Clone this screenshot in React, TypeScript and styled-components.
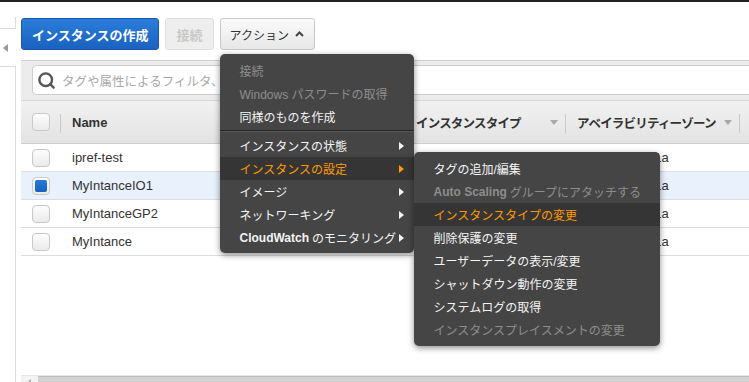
import React from "react";
import styled, { createGlobalStyle } from "styled-components";
import { Search } from "lucide-react";

const GlobalStyle = createGlobalStyle`
  html, body { margin: 0; padding: 0; overflow: hidden; background: #fff; }
  body { font-family: "Liberation Sans", "Noto Sans CJK JP", Arial, sans-serif; color: #333; }
  * { box-sizing: border-box; }
`;

const Page = styled.div`
  width: 749px;
  height: 392px;
  display: flex;
  flex-direction: column;
  overflow: hidden;
`;

const TopStrip = styled.div`
  height: 2px;
  flex-shrink: 0;
  background: #222;
`;

const Body = styled.div`
  flex: 1;
  display: flex;
  min-height: 0;
`;

const Sidebar = styled.div`
  width: 21px;
  flex-shrink: 0;
  display: flex;
  flex-direction: column;
`;

const SideTopBox = styled.div`
  width: 16px;
  height: 12px;
  margin-top: 15px;
  border-right: 1px solid #dcdcdc;
  border-bottom: 1px solid #dcdcdc;
`;

const SideArrow = styled.div`
  width: 0;
  height: 0;
  margin: 15px 0 0 3px;
  border-top: 4.5px solid transparent;
  border-bottom: 4.5px solid transparent;
  border-right: 5px solid #9a9a9a;
`;

const SideLowerBox = styled.div`
  flex: 1;
  width: 16px;
  margin-top: 14px;
  border-top: 1px solid #dcdcdc;
  border-right: 1px solid #dcdcdc;
`;

const Main = styled.div`
  flex: 1;
  display: flex;
  flex-direction: column;
  min-width: 0;
`;

const Toolbar = styled.div`
  display: flex;
  align-items: flex-start;
  gap: 6px;
  padding: 16px 0 10px;
`;

const Button = styled.button<{ $variant: "primary" | "disabled" | "default" }>`
  height: 32px;
  display: flex;
  align-items: center;
  gap: 6px;
  border-radius: 3px;
  font-family: "Liberation Sans", "Noto Sans CJK JP", sans-serif;
  cursor: pointer;
  ${(p) =>
    p.$variant === "primary"
      ? `
    padding: 0 10px;
    font-size: 13px;
    font-weight: bold;
    color: #fff;
    background: linear-gradient(#2b7ddb, #1a62c0);
    border: 1px solid #1958a8;
  `
      : p.$variant === "disabled"
      ? `
    padding: 0 10px;
    font-size: 13px;
    font-weight: bold;
    color: #c9c9c9;
    background: #eeeeee;
    border: 1px solid #dedede;
  `
      : `
    padding: 0 10px 0 9px;
    font-size: 12px;
    color: #333;
    background: linear-gradient(#fbfbfb, #e7e7e7);
    border: 1px solid #c8c8c8;
  `}
`;

const ActionWrap = styled.div`
  position: relative;
`;

const FilterPanel = styled.div`
  background: #ececec;
  border-top: 1px solid #cfcfcf;
  padding: 4px 0 5px 11px;
`;

const SearchBox = styled.div`
  height: 30px;
  display: flex;
  align-items: center;
  gap: 6px;
  padding-left: 4px;
  margin-right: -12px;
  background: #fff;
  border: 1px solid #cdcdcd;
  border-radius: 4px;
  color: #555;
`;

const Placeholder = styled.span`
  font-size: 12.5px;
  color: #a8a8a8;
  white-space: nowrap;
`;

const cols = "40px 344px 161px 174px 1fr";

const HeaderRow = styled.div`
  display: grid;
  grid-template-columns: ${cols};
  height: 44px;
  border-top: 1px solid #d6d6d6;
  border-bottom: 1px solid #cdcdcd;
  background: linear-gradient(#f1f1f1, #e3e3e3);
`;

const HeaderCell = styled.div<{ $sep?: boolean }>`
  position: relative;
  display: flex;
  align-items: center;
  padding: 0 8px 0 11px;
  font-size: 13px;
  font-weight: bold;
  color: #333;
  white-space: nowrap;
  overflow: hidden;
  &::after {
    content: "";
    display: ${(p) => (p.$sep ? "block" : "none")};
    position: absolute;
    right: 0;
    top: 13px;
    width: 1px;
    height: 19px;
    background: #c9c9c9;
  }
`;

const JpLabel = styled.span`
  font-size: 12.5px;
  letter-spacing: -0.8px;
`;

const Caret = styled.span`
  margin-left: auto;
  width: 0;
  height: 0;
  border-left: 4px solid transparent;
  border-right: 4px solid transparent;
  border-top: 5px solid #a8a8a8;
`;

const Row = styled.div<{ $selected?: boolean }>`
  display: grid;
  grid-template-columns: ${cols};
  height: 28px;
  border-bottom: 1px solid #dddddd;
  background: ${(p) => (p.$selected ? "#e9f1fc" : "#fff")};
`;

const Cell = styled.div`
  display: flex;
  align-items: center;
  padding-left: 11px;
  font-size: 13px;
  color: #333;
  white-space: nowrap;
  overflow: hidden;
`;

const Check = styled.span<{ $checked?: boolean }>`
  width: 18px;
  height: 18px;
  display: flex;
  align-items: center;
  justify-content: center;
  border: 1px solid #c9c9c9;
  border-radius: 4px;
  background: linear-gradient(#fdfdfd, #ebebeb);
  &::after {
    content: "";
    width: 12px;
    height: 12px;
    border-radius: 2px;
    background: ${(p) => (p.$checked ? "linear-gradient(#2a78d6, #1761c0)" : "transparent")};
  }
`;

const Spacer = styled.div`
  flex: 1;
`;

const HScroll = styled.div`
  height: 17px;
  flex-shrink: 0;
  display: flex;
  border-top: 1px solid #e6e6e6;
`;

const ScrollBtn = styled.div`
  width: 17px;
  display: flex;
  justify-content: center;
  padding-top: 3px;
  background: #f3f3f3;
  &::before {
    content: "";
    width: 0;
    height: 0;
    border-top: 2px solid transparent;
    border-bottom: 2px solid transparent;
    border-right: 3px solid #b5b5b5;
  }
`;

const ScrollTrack = styled.div`
  flex: 1;
  background: #d2d2d2;
  border-top: 1px solid #bdbdbd;
`;

const Menu = styled.ul<{ $sub?: boolean }>`
  position: absolute;
  z-index: 10;
  margin: 0;
  list-style: none;
  background: #454545;
  border-radius: 5px;
  box-shadow: 0 2px 6px rgba(0, 0, 0, 0.45);
  top: ${(p) => (p.$sub ? "-5px" : "36px")};
  left: ${(p) => (p.$sub ? "100%" : "0")};
  width: ${(p) => (p.$sub ? "246px" : "194px")};
  padding: ${(p) => (p.$sub ? "5px 0" : "5px 0 4px")};
  text-align: left;
`;

const Item = styled.li<{ $state?: "normal" | "disabled" | "active" }>`
  position: relative;
  height: 23px;
  display: flex;
  align-items: center;
  padding: 0 10px 0 20px;
  font-size: 12px;
  white-space: nowrap;
  color: ${(p) =>
    p.$state === "disabled" ? "#8d8d8d" : p.$state === "active" ? "#ff9900" : "#f4f4f4"};
  background: ${(p) => (p.$state === "active" ? "#353535" : "transparent")};
`;

const SubArrow = styled.span<{ $active?: boolean }>`
  margin-left: auto;
  width: 0;
  height: 0;
  border-top: 4.5px solid transparent;
  border-bottom: 4.5px solid transparent;
  border-left: 5px solid ${(p) => (p.$active ? "#ff9900" : "#f4f4f4")};
`;

const Separator = styled.li`
  height: 2px;
  margin: 2px 0;
  border-top: 1px solid #252525;
  border-bottom: 1px solid #555;
`;

const Strong = styled.b`
  font-weight: bold;
  margin-right: 3px;
`;

const Chevron = () => (
  <svg width="9" height="6" viewBox="0 0 9 6">
    <polyline points="1,5 4.5,1.5 8,5" fill="none" stroke="#444" strokeWidth="2" />
  </svg>
);

const rows = [
  { name: "ipref-test", az: "ap-northeast-1a", selected: false },
  { name: "MyIntanceIO1", az: "ap-northeast-1a", selected: true },
  { name: "MyIntanceGP2", az: "ap-northeast-1a", selected: false },
  { name: "MyIntance", az: "ap-northeast-1a", selected: false },
];

export default function App() {
  return (
    <>
      <GlobalStyle />
      <Page>
        <TopStrip />
        <Body>
          <Sidebar>
            <SideTopBox />
            <SideArrow />
            <SideLowerBox />
          </Sidebar>
          <Main>
            <Toolbar>
              <Button $variant="primary">インスタンスの作成</Button>
              <Button $variant="disabled">接続</Button>
              <ActionWrap>
                <Button $variant="default">
                  アクション <Chevron />
                </Button>
                <Menu>
                  <Item $state="disabled">接続</Item>
                  <Item $state="disabled">Windows パスワードの取得</Item>
                  <Item>同様のものを作成</Item>
                  <Separator />
                  <Item>
                    インスタンスの状態
                    <SubArrow />
                  </Item>
                  <Item $state="active">
                    インスタンスの設定
                    <SubArrow $active />
                    <Menu $sub>
                      <Item>タグの追加/編集</Item>
                      <Item $state="disabled">
                        <Strong>Auto Scaling</Strong>グループにアタッチする
                      </Item>
                      <Item $state="active">インスタンスタイプの変更</Item>
                      <Item>削除保護の変更</Item>
                      <Item>ユーザーデータの表示/変更</Item>
                      <Item>シャットダウン動作の変更</Item>
                      <Item>システムログの取得</Item>
                      <Item $state="disabled">インスタンスプレイスメントの変更</Item>
                    </Menu>
                  </Item>
                  <Item>
                    イメージ
                    <SubArrow />
                  </Item>
                  <Item>
                    ネットワーキング
                    <SubArrow />
                  </Item>
                  <Item>
                    <Strong>CloudWatch</Strong>のモニタリング
                    <SubArrow />
                  </Item>
                </Menu>
              </ActionWrap>
            </Toolbar>

            <FilterPanel>
              <SearchBox>
                <Search size={19} strokeWidth={3} color="#555" />
                <Placeholder>タグや属性によるフィルタ、またはキーワードで検索</Placeholder>
              </SearchBox>
            </FilterPanel>

            <HeaderRow>
              <HeaderCell $sep>
                <Check />
              </HeaderCell>
              <HeaderCell $sep>
                Name
                <Caret />
              </HeaderCell>
              <HeaderCell $sep>
                <JpLabel>インスタンスタイプ</JpLabel>
                <Caret />
              </HeaderCell>
              <HeaderCell $sep>
                <JpLabel>アベイラビリティーゾーン</JpLabel>
                <Caret />
              </HeaderCell>
              <HeaderCell />
            </HeaderRow>

            {rows.map((r) => (
              <Row key={r.name} $selected={r.selected}>
                <Cell>
                  <Check $checked={r.selected} />
                </Cell>
                <Cell>{r.name}</Cell>
                <Cell />
                <Cell>{r.az}</Cell>
                <Cell />
              </Row>
            ))}

            <Spacer />
            <HScroll>
              <ScrollBtn />
              <ScrollTrack />
            </HScroll>
          </Main>
        </Body>
      </Page>
    </>
  );
}
